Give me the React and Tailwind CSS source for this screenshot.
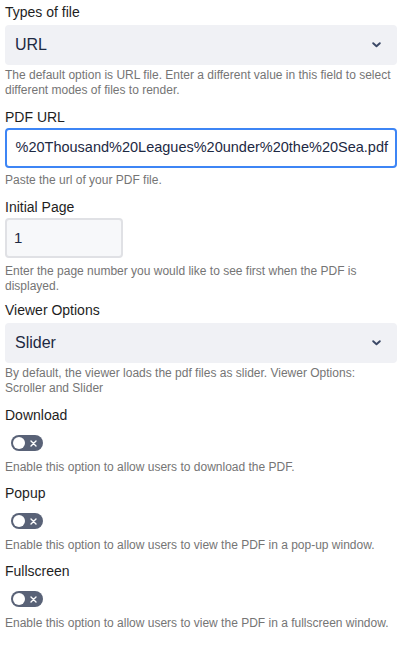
import React from "react";

const labelCls = "text-[14px] leading-[20px] text-[#1e1e1e]";
const helpCls = "text-[12px] leading-[15px] text-[#757575]";

function Chevron() {
  return (
    <svg width="9" height="6" viewBox="0 0 9 6" className="shrink-0">
      <path d="M1.2 1.2 L4.5 4.3 L7.8 1.2" fill="none" stroke="#3b4866" strokeWidth="1.9" strokeLinecap="round" strokeLinejoin="round" />
    </svg>
  );
}

function SelectBox({ value }) {
  return (
    <div className="flex h-[40px] items-center justify-between rounded-[4px] bg-[#f0f1f5] pl-[10px] pr-[16px]">
      <span className="text-[16px] text-[#1d2943]">{value}</span>
      <Chevron />
    </div>
  );
}

function Toggle() {
  return (
    <div className="relative mt-[10px] ml-[6px] flex h-[16px] w-[32px] items-center rounded-full bg-[#596277]">
      <div className="ml-[2px] h-[12px] w-[12px] rounded-full bg-white" />
      <svg width="7" height="7" viewBox="0 0 7 7" className="ml-[5px]">
        <path d="M1 1 L6 6 M6 1 L1 6" stroke="white" strokeWidth="1.4" strokeLinecap="round" />
      </svg>
    </div>
  );
}

function ToggleField({ label, help }) {
  return (
    <div className="mb-[8px]">
      <div className={labelCls}>{label}</div>
      <Toggle />
      <div className={`${helpCls} mt-[9px]`}>{help}</div>
    </div>
  );
}

export default function App() {
  return (
    <div className="h-[648px] w-[413px] bg-white px-[5px] pt-[2px] [font-family:'Liberation_Sans',Arial,sans-serif]">
      <div className="w-[392px]">
        <div className="mb-[9px]">
          <div className={`${labelCls} mb-[3px]`}>Types of file</div>
          <SelectBox value="URL" />
          <div className={`${helpCls} mt-[3px]`}>
            The default option is URL file. Enter a different value in this field to select different modes of files to render.
          </div>
        </div>

        <div className="mb-[9px]">
          <div className={`${labelCls} mb-[1px]`}>PDF URL</div>
          <div className="flex h-[40px] items-center justify-end overflow-hidden rounded-[4px] border-2 border-[#3d85f5] bg-white pl-[7px] pr-[7px]">
            <span className="whitespace-nowrap text-[14.5px] text-[#1d2943]">
              %20Thousand%20Leagues%20under%20the%20Sea.pdf
            </span>
          </div>
          <div className={`${helpCls} mt-[5px]`}>Paste the url of your PDF file.</div>
        </div>

        <div className="mb-[6px]">
          <div className={`${labelCls} mb-[1px]`}>Initial Page</div>
          <div className="flex h-[40px] w-[118px] items-center rounded-[4px] border-2 border-[#e0e1e5] bg-[#f7f8fa] pl-[7px]">
            <span className="text-[15px] text-[#1d2943]">1</span>
          </div>
          <div className={`${helpCls} mt-[6px]`}>
            Enter the page number you would like to see first when the PDF is displayed.
          </div>
        </div>

        <div className="mb-[9px]">
          <div className={`${labelCls} mb-[3px]`}>Viewer Options</div>
          <SelectBox value="Slider" />
          <div className={`${helpCls} mt-[3px]`}>
            By default, the viewer loads the pdf files as slider. Viewer Options: Scroller and Slider
          </div>
        </div>

        <ToggleField label="Download" help="Enable this option to allow users to download the PDF." />
        <ToggleField label="Popup" help="Enable this option to allow users to view the PDF in a pop-up window." />
        <ToggleField label="Fullscreen" help="Enable this option to allow users to view the PDF in a fullscreen window." />
      </div>
    </div>
  );
}
